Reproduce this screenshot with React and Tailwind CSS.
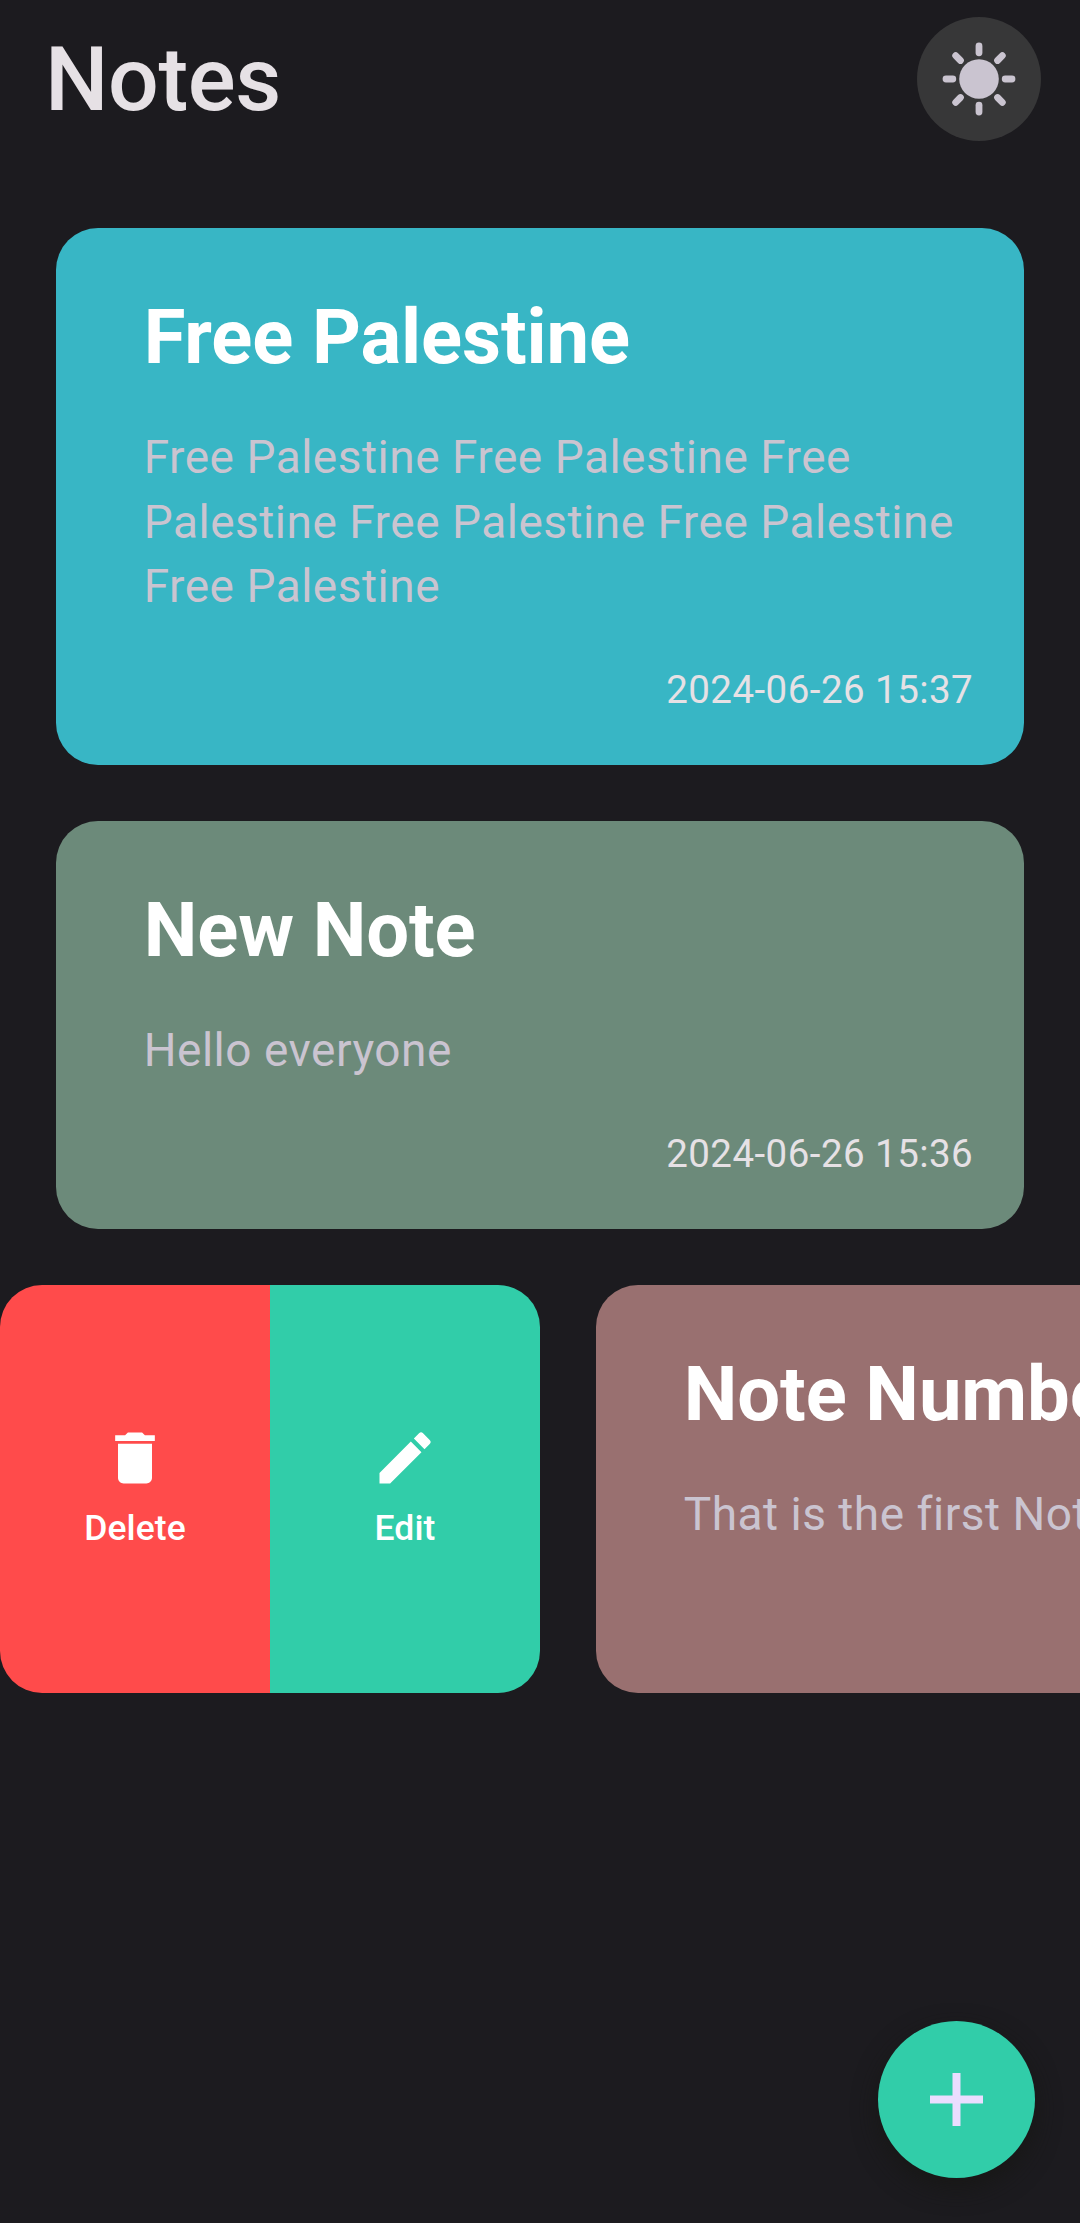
import React from 'react';
import { MdDelete, MdEdit } from 'react-icons/md';

function SunIcon() {
  const rays = [0, 45, 90, 135, 180, 225, 270, 315];
  return (
    <svg viewBox="-40 -40 80 80" className="size-20" fill="#cac4d0">
      <circle r="19.8" />
      {rays.map((a) => (
        <rect key={a} x="-3.4" y="-36.4" width="6.8" height="13.6" rx="3.4" transform={`rotate(${a})`} />
      ))}
    </svg>
  );
}

function PlusIcon() {
  return (
    <svg viewBox="0 0 53 53" className="size-[53px]" fill="#eaddff">
      <path d="M22.5 0h8v22.5H53v8H30.5V53h-8V30.5H0v-8h22.5z" />
    </svg>
  );
}

function NoteCard({ title, body, date, className }) {
  return (
    <article
      className={`flex w-[967.5px] shrink-0 flex-col rounded-[42px] pb-[50px] pl-[87.5px] pr-[50.5px] pt-[64px] ${className}`}
    >
      <h2 className="whitespace-nowrap text-[76px] font-bold leading-[90px] tracking-[-0.1px] text-white">{title}</h2>
      <p className="mt-[43px] text-[46px] leading-[64.4px] tracking-[0.5px] text-[#cac4d0]">{body}</p>
      <time className="mt-[45.5px] self-end text-[38.5px] leading-[52px] tracking-[0.45px] text-[#e6e1e5]">{date}</time>
    </article>
  );
}

function SlideAction({ icon: Icon, label, className }) {
  return (
    <button className={`flex h-full flex-1 flex-col items-center pt-[139px] text-white ${className}`}>
      <Icon className="size-[68px]" />
      <span className="mt-[14.5px] text-[35.5px] font-medium leading-[42px] tracking-[0.1px]">{label}</span>
    </button>
  );
}

export default function App() {
  return (
    <div className="relative h-[2223px] w-[1080px] overflow-hidden bg-[#1c1b1f] font-[Roboto,sans-serif]">
      <header className="flex h-[158px] items-center justify-between pl-[45px] pr-[39px]">
        <h1 className="pt-[2px] text-[89.5px] font-medium leading-[106px] tracking-[-0.45px] text-[#e6e1e5]">Notes</h1>
        <button className="flex size-[124px] items-center justify-center rounded-full bg-[#373738]">
          <SunIcon />
        </button>
      </header>

      <main className="flex flex-col gap-[56.1px] pt-[70.2px]">
        <NoteCard
          className="ml-[56.2px] h-[537.2px] bg-[#38b6c5]"
          title="Free Palestine"
          body="Free Palestine Free Palestine Free Palestine Free Palestine Free Palestine Free Palestine"
          date="2024-06-26 15:37"
        />
        <NoteCard
          className="ml-[56.2px] h-[407.7px] bg-[#6c8a7a]"
          title="New Note"
          body="Hello everyone"
          date="2024-06-26 15:36"
        />
        <div className="flex h-[407.7px] gap-[56.2px]">
          <div className="flex w-[540px] shrink-0 overflow-hidden rounded-[42px]">
            <SlideAction icon={MdDelete} label="Delete" className="bg-[#ff4b4b]" />
            <SlideAction icon={MdEdit} label="Edit" className="bg-[#31cda9]" />
          </div>
          <NoteCard
            className="bg-[#997070]"
            title="Note Number 1"
            body="That is the first Note"
            date="2024-06-26 15:35"
          />
        </div>
      </main>

      <button className="absolute bottom-[45px] right-[45px] flex size-[157.5px] items-center justify-center rounded-full bg-[#31cda9] shadow-[0_10px_24px_rgba(22,22,20,0.8)]">
        <PlusIcon />
      </button>
    </div>
  );
}
